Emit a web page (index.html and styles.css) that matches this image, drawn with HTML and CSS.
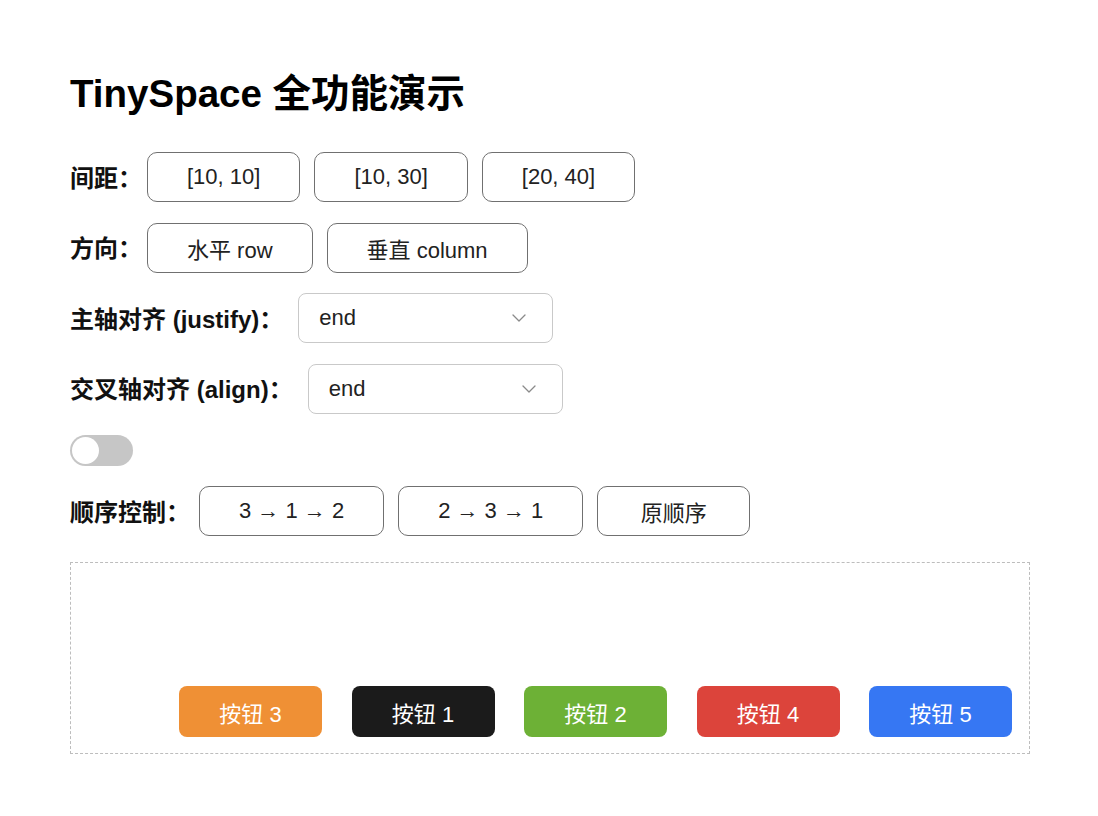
FILE: index.html
```html
<!DOCTYPE html>
<html lang="zh">
<head>
<meta charset="utf-8">
<title>TinySpace 全功能演示</title>
<link rel="stylesheet" href="styles.css">
</head>
<body>
<div class="page">
  <h1 class="title">TinySpace 全功能演示</h1>
  <div class="controls">
    <div class="row">
      <span class="label">间距：</span>
      <div class="group">
        <button class="btn">[10, 10]</button>
        <button class="btn">[10, 30]</button>
        <button class="btn">[20, 40]</button>
      </div>
    </div>
    <div class="row">
      <span class="label">方向：</span>
      <div class="group">
        <button class="btn">水平 row</button>
        <button class="btn">垂直 column</button>
      </div>
    </div>
    <div class="row">
      <span class="label label-wide">主轴对齐 (justify)：</span>
      <div class="select">
        <span>end</span>
        <svg class="chev" width="14" height="8" viewBox="0 0 14 8"><path d="M1 1 L7 7 L13 1" fill="none" stroke="#8a8a8a" stroke-width="1.3" stroke-linecap="round" stroke-linejoin="round"/></svg>
      </div>
    </div>
    <div class="row">
      <span class="label label-wide">交叉轴对齐 (align)：</span>
      <div class="select">
        <span>end</span>
        <svg class="chev" width="14" height="8" viewBox="0 0 14 8"><path d="M1 1 L7 7 L13 1" fill="none" stroke="#8a8a8a" stroke-width="1.3" stroke-linecap="round" stroke-linejoin="round"/></svg>
      </div>
    </div>
    <div class="row">
      <div class="toggle"><div class="knob"></div></div>
    </div>
    <div class="row">
      <span class="label label-order">顺序控制：</span>
      <div class="group">
        <button class="btn">3 → 1 → 2</button>
        <button class="btn">2 → 3 → 1</button>
        <button class="btn">原顺序</button>
      </div>
    </div>
  </div>
  <div class="space">
    <div class="item orange">按钮 3</div>
    <div class="item black">按钮 1</div>
    <div class="item green">按钮 2</div>
    <div class="item red">按钮 4</div>
    <div class="item blue">按钮 5</div>
  </div>
</div>
</body>
</html>
```

FILE: styles.css
```css
* { box-sizing: border-box; }
html, body { margin: 0; padding: 0; background: #fff; }
body {
  font-family: "Liberation Sans", "Noto Sans CJK SC", sans-serif;
  color: #111;
}
.page {
  padding: 71px 0 0 70px;
}
.title {
  margin: 0 0 35px 0;
  font-size: 38.5px;
  line-height: 1.2;
  font-weight: 700;
  color: #000;
}
.controls {
  display: flex;
  flex-direction: column;
  gap: 20.6px;
}
.row {
  display: flex;
  align-items: center;
  min-height: 31px;
}
.group {
  display: flex;
  gap: 14px;
}
.label {
  font-size: 24px;
  font-weight: 700;
  color: #111;
  margin-right: 5px;
  position: relative;
  top: -1px;
}
.label-wide { margin-right: 15px; }
.label-order { margin-right: 9px; }
.btn {
  height: 50px;
  min-width: 153px;
  padding: 0 39px;
  font-family: inherit;
  font-size: 22px;
  color: #222;
  background: #fff;
  border: 1.5px solid #707070;
  border-radius: 10px;
}
.select {
  width: 255px;
  height: 50px;
  display: flex;
  align-items: center;
  justify-content: space-between;
  padding: 0 26px 0 20px;
  border: 1px solid #c9c9c9;
  border-radius: 8px;
  font-size: 22px;
  color: #222;
  background: #fff;
}
.chev { display: block; }
.toggle {
  width: 63px;
  height: 31px;
  border-radius: 16px;
  background: #c6c6c6;
  padding: 2px;
}
.knob {
  width: 27px;
  height: 27px;
  border-radius: 50%;
  background: #fff;
}
.space {
  margin-top: 25.5px;
  width: 960px;
  height: 192.5px;
  border: 1.5px dashed #bdbdbd;
  display: flex;
  justify-content: flex-end;
  align-items: flex-end;
  gap: 29.5px;
  padding: 0 17px 16px 0;
}
.item {
  width: 143px;
  height: 51px;
  border-radius: 8px;
  display: flex;
  align-items: center;
  justify-content: center;
  font-size: 22px;
  color: #fff;
}
.orange { background: #ef9035; }
.black { background: #1b1b1b; }
.green { background: #6db136; }
.red { background: #dc443b; }
.blue { background: #3677f3; }
```
